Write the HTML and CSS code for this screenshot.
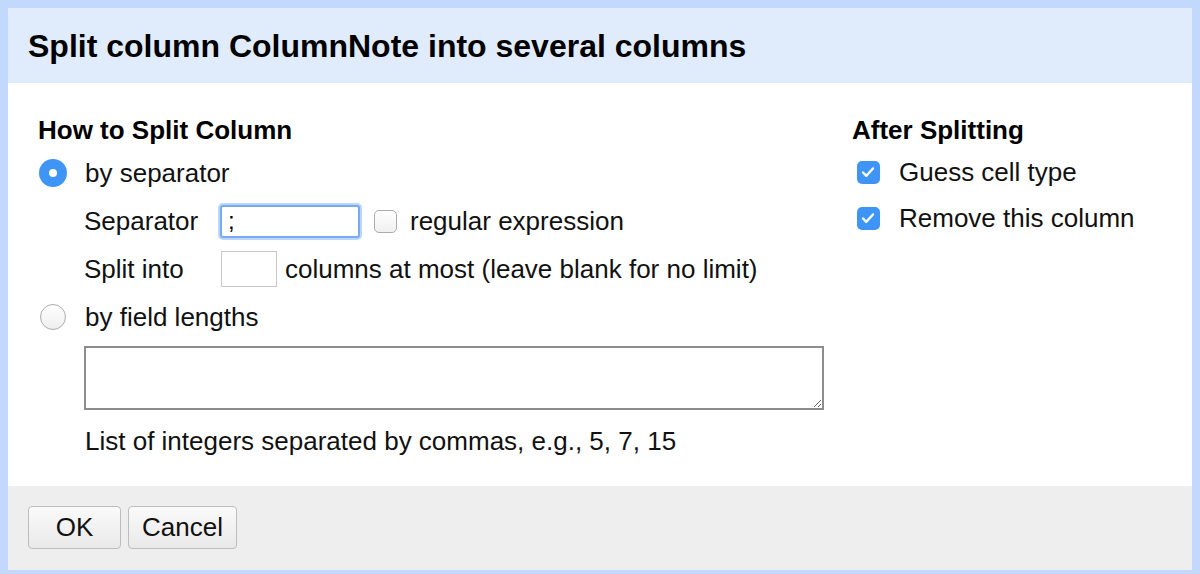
FILE: index.html
```html
<!DOCTYPE html>
<html lang="en">
<head>
    <meta charset="UTF-8">
    <title>Split column</title>
    <link rel="stylesheet" href="styles.css">
</head>
<body>

    <!-- Split column dialog -->
    <div class="dialog">
        <div class="dialog-header">Split column ColumnNote into several columns</div>

        <div class="dialog-body">
            <!-- Left: how to split -->
            <div class="split-options">
                <div class="section-title">How to Split Column</div>

                <div class="row">
                    <span class="radio checked"></span>
                    <span>by separator</span>
                </div>

                <div class="row indent">
                    <span class="field-label">Separator</span>
                    <input type="text" class="sep-input" value=";">
                    <span class="checkbox"></span>
                    <span>regular expression</span>
                </div>

                <div class="row indent">
                    <span class="field-label">Split into</span>
                    <input type="text" class="limit-input">
                    <span>columns at most (leave blank for no limit)</span>
                </div>

                <div class="row">
                    <span class="radio"></span>
                    <span>by field lengths</span>
                </div>

                <textarea class="lengths"></textarea>
                <div class="hint">List of integers separated by commas, e.g., 5, 7, 15</div>
            </div>

            <!-- Right: after splitting -->
            <div class="after-options">
                <div class="section-title">After Splitting</div>
                <div class="check-row">
                    <span class="checkbox checked">
                        <svg viewBox="0 0 22 22" width="22" height="22"><path d="M6 11.5l3.3 3.3L16 7.5" fill="none" stroke="#fff" stroke-width="2.4" stroke-linecap="round" stroke-linejoin="round"/></svg>
                    </span>
                    <span>Guess cell type</span>
                </div>
                <div class="check-row">
                    <span class="checkbox checked">
                        <svg viewBox="0 0 22 22" width="22" height="22"><path d="M6 11.5l3.3 3.3L16 7.5" fill="none" stroke="#fff" stroke-width="2.4" stroke-linecap="round" stroke-linejoin="round"/></svg>
                    </span>
                    <span>Remove this column</span>
                </div>
            </div>
        </div>

        <div class="dialog-footer">
            <button class="btn btn-ok">OK</button>
            <button class="btn">Cancel</button>
        </div>
    </div>

</body>
</html>
```

FILE: styles.css
```css
/* Page */
body, html {
    margin: 0;
    height: 100%;
}

body {
    background-color: #c2d9fd;
    font-family: "Liberation Sans", Arial, sans-serif;
    font-size: 26px;
    color: #111;
    padding: 8px 8px 0 8px;
    box-sizing: border-box;
}

/* Dialog frame */
.dialog {
    height: 562px;
    display: flex;
    flex-direction: column;
    background-color: white;
}

.dialog-header {
    height: 75px;
    background-color: #e0ecfc;
    padding-left: 20px;
    font-size: 32px;
    font-weight: bold;
    line-height: 76px;
    color: #000;
}

.dialog-body {
    flex: 1;
    display: flex;
    padding: 34px 0 0 30px;
}

.split-options {
    width: 814px;
}

.after-options {
    flex: 1;
}

.section-title {
    font-weight: bold;
    line-height: 26px;
    color: #000;
    margin-bottom: 6px;
}

/* Rows */
.row {
    height: 48px;
    display: flex;
    align-items: center;
}

.row.indent {
    padding-left: 46px;
}

.field-label {
    width: 134px;
    flex-shrink: 0;
}

/* Radio buttons */
.radio {
    width: 26px;
    height: 26px;
    border-radius: 50%;
    box-sizing: border-box;
    border: 1px solid #ababab;
    background: linear-gradient(#fff, #eeeeee);
    margin: 0 19px 0 2px;
    position: relative;
}

.radio.checked {
    width: 28px;
    height: 28px;
    margin: 0 18px 0 1px;
    border: none;
    background: #3f95f6;
}

.radio.checked::after {
    content: "";
    position: absolute;
    left: 10px;
    top: 10px;
    width: 8px;
    height: 8px;
    border-radius: 50%;
    background: white;
}

/* Checkboxes */
.checkbox {
    width: 23px;
    height: 23px;
    box-sizing: border-box;
    border: 1px solid #ababab;
    border-radius: 5px;
    background: linear-gradient(#fff, #f0f0f0);
    margin: 0 13px 0 14px;
    display: inline-flex;
    flex-shrink: 0;
}

.checkbox.checked {
    border: none;
    background: #3f95f6;
    margin: 0 19px 0 5px;
}

/* Text inputs */
input[type="text"] {
    font-family: "Liberation Sans", Arial, sans-serif;
    font-size: 24px;
    box-sizing: border-box;
    padding: 0 6px;
    outline: none;
}

.sep-input {
    width: 140px;
    height: 33px;
    border: 2px solid #77aaf2;
    border-radius: 3px;
    box-shadow: 0 0 0 2px #bcd6fb;
    margin-left: 2px;
}

.limit-input {
    width: 56px;
    height: 36px;
    border: 1px solid #c9c9c9;
    margin: 0 8px 0 3px;
}

.lengths {
    display: block;
    width: 740px;
    height: 64px;
    box-sizing: border-box;
    margin: 5px 0 0 46px;
    border: 2px solid #8d8d8d;
    resize: both;
    font-size: 22px;
    font-family: "Liberation Sans", Arial, sans-serif;
}

.hint {
    margin: 18px 0 0 47px;
    line-height: 26px;
}

/* After splitting checkboxes */
.check-row {
    height: 46px;
    display: flex;
    align-items: center;
}

/* Footer */
.dialog-footer {
    height: 84px;
    background-color: #eeeeee;
    padding: 20px 0 0 20px;
    box-sizing: border-box;
    display: flex;
    align-items: flex-start;
    gap: 7px;
}

.btn {
    height: 43px;
    padding: 0 13px;
    font-family: "Liberation Sans", Arial, sans-serif;
    font-size: 26px;
    color: #111;
    border: 1px solid #bdbdbd;
    border-radius: 4px;
    background: linear-gradient(#fafafa, #e9e9e9);
}

.btn-ok {
    width: 93px;
}
```
